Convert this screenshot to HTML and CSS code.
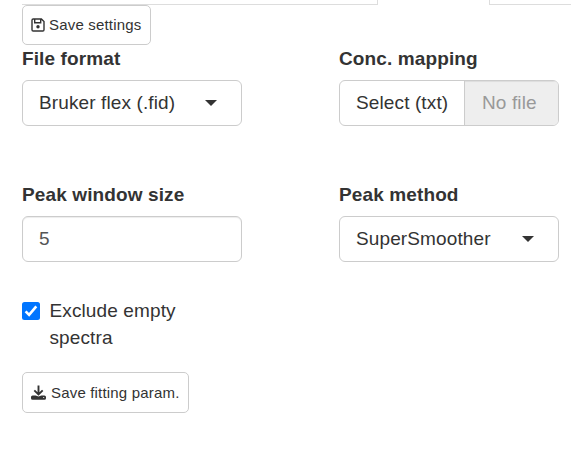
FILE: index.html
```html
<!DOCTYPE html>
<html lang="en">
<head>
<meta charset="utf-8">
<title>Settings</title>
<link rel="stylesheet" href="styles.css">
</head>
<body>
<div class="tabs"><div class="tabs-before"></div><div class="tab-active"></div><div class="tabs-after"></div></div>
<main class="panel">
  <button class="btn btn-small btn-settings">
    <svg class="icon-disk" viewBox="0 0 14 14" fill="none" stroke="#333" stroke-width="1.4"><path d="M2.2 1h8.2L13 3.6v8.2a1.2 1.2 0 0 1-1.2 1.2H2.2A1.2 1.2 0 0 1 1 11.8V2.2A1.2 1.2 0 0 1 2.2 1zM3.7 1v3.8h6V1"/><circle cx="7" cy="8.7" r="1.7" fill="#333" stroke="none"/></svg>
    <span>Save settings</span>
  </button>
  <div class="fields">
    <div class="field">
      <label>File format</label>
      <button class="control"><span>Bruker flex (.fid)</span><i class="caret"></i></button>
    </div>
    <div class="field">
      <label>Conc. mapping</label>
      <div class="file-input"><span class="file-select">Select (txt)</span><span class="file-name">No file</span></div>
    </div>
    <div class="field">
      <label for="window-size">Peak window size</label>
      <input class="control input" id="window-size" type="text" value="5">
    </div>
    <div class="field">
      <label>Peak method</label>
      <button class="control"><span>SuperSmoother</span><i class="caret"></i></button>
    </div>
  </div>
  <label class="check"><input type="checkbox" checked><svg class="box" viewBox="0 0 18 18"><rect width="18" height="18" rx="2.5" fill="#0075ff"/><path d="M3.6 9.4l3.5 3.5 7.2-8.6" fill="none" stroke="#fff" stroke-width="2.6"/></svg><span>Exclude empty spectra</span></label>
  <button class="btn btn-small btn-save">
    <svg class="icon-download" viewBox="0 0 15 15"><path d="M7.5 0.5v8.7M3.3 5.4l4.2 4 4.2-4" fill="none" stroke="#333" stroke-width="1.9"/><path d="M1.6 10.400h3l2.900 1.200 2.900-1.200h3A1.600 1.600 0 0 1 15 12v1.200a1.600 1.600 0 0 1-1.600 1.600H1.600A1.600 1.600 0 0 1 0 13.200V12A1.600 1.600 0 0 1 1.600 10.400z" fill="#333"/><circle cx="12.700" cy="12.500" r=".6" fill="#fff"/></svg>
    <span>Save fitting param.</span>
  </button>
</main>
</body>
</html>
```

FILE: styles.css
```css
* { box-sizing: border-box; }
body {
  margin: 0;
  background: #fff;
  color: #333;
  font: 19px/27px "Liberation Sans", Arial, sans-serif;
  letter-spacing: .12px;
  overflow: hidden;
}
.tabs { display: flex; height: 5px; padding-left: 22px; }
.tabs-before { width: 355px; border-bottom: 1px solid #ddd; }
.tab-active { width: 113px; border: solid #ddd; border-width: 0 1px; }
.tabs-after { flex: 1; border-bottom: 1px solid #ddd; }
.panel { padding: 0 12px 0 22px; }
button, input { font: inherit; color: inherit; margin: 0; letter-spacing: inherit; }
.btn {
  display: flex;
  align-items: center;
  background: #fff;
  border: 1px solid #ccc;
  border-radius: 5px;
  padding: 0 8px;
  white-space: nowrap;
}
.btn-small { font-size: 15px; line-height: 22px; letter-spacing: .18px; }
.btn-settings { width: 129px; height: 40px; }
.btn-save { width: 167px; height: 41px; margin-top: 21px; }
.icon-disk { width: 14px; height: 14px; flex: none; margin-right: 4px; }
.icon-download { width: 15px; height: 15px; flex: none; margin-right: 5px; }
.fields {
  display: grid;
  grid-template-columns: 220px 220px;
  column-gap: 97px;
  row-gap: 55px;
}
.field label {
  display: block;
  height: 27px;
  margin-bottom: 8px;
  font-weight: 700;
  white-space: nowrap;
}
.field { height: 81px; }
.control {
  display: flex;
  align-items: center;
  justify-content: space-between;
  width: 220px;
  height: 46px;
  padding: 0 24px 1px 16px;
  border: 1px solid #ccc;
  border-radius: 6px;
  background: #fff;
}
.input { padding-bottom: 0; color: #555; box-shadow: inset 0 1px 1px rgba(0, 0, 0, .075); outline: none; }
.caret { border: solid transparent; border-width: 6px 6px 0; border-top-color: #333; }
.file-input {
  display: flex;
  height: 46px;
  border: 1px solid #ccc;
  border-radius: 6px;
  overflow: hidden;
  line-height: 44px;
}
.file-select { width: 125px; padding-left: 16px; border-right: 1px solid #ccc; }
.file-name {
  flex: 1;
  padding-left: 17px;
  background: #eee;
  color: #999;
  box-shadow: inset 0 1px 1px rgba(0, 0, 0, .075);
}
.check { display: flex; width: 190px; margin-top: 35px; }
.check input { position: absolute; opacity: 0; }
.box { width: 18px; height: 18px; flex: none; margin: 5px 9.500px 0 0; }
```
